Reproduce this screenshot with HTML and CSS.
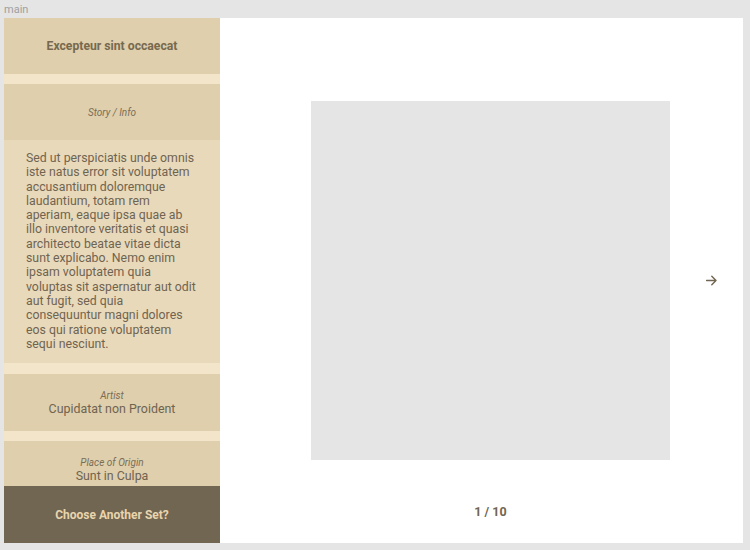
FILE: index.html
```html
<!DOCTYPE html>
<html>
<head>
<meta charset="utf-8">
<link rel="stylesheet" href="styles.css">
</head>
<body>
<div class="label">main</div>
<div class="frame">
  <aside class="sidebar">
    <div class="scroll">
      <div class="block title">Excepteur sint occaecat</div>
      <div class="block small-italic">Story / Info</div>
      <div class="story">Sed ut perspiciatis unde omnis iste natus error sit voluptatem accusantium doloremque laudantium, totam rem aperiam, eaque ipsa quae ab illo inventore veritatis et quasi architecto beatae vitae dicta sunt explicabo. Nemo enim ipsam voluptatem quia voluptas sit aspernatur aut odit aut fugit, sed quia consequuntur magni dolores eos qui ratione voluptatem sequi nesciunt.</div>
      <div class="block meta"><span class="meta-label">Artist</span><span class="meta-value">Cupidatat non Proident</span></div>
      <div class="block meta"><span class="meta-label">Place of Origin</span><span class="meta-value">Sunt in Culpa</span></div>
    </div>
    <div class="choose">Choose Another Set?</div>
  </aside>
  <section class="viewer">
    <div class="image"></div>
    <div class="next">
      <svg width="11" height="11" viewBox="0 0 11 11"><path d="M0.5 5.5H10M5.8 1.2L10 5.5L5.8 9.8" fill="none" stroke="#716651" stroke-width="1.4" stroke-linecap="round" stroke-linejoin="round"/></svg>
    </div>
    <div class="counter">1 / 10</div>
  </section>
</div>
</body>
</html>
```
FILE: styles.css
```css
html, body {
  margin: 0;
  padding: 0;
  background: #e5e5e5;
  font-family: Roboto, "Liberation Sans", sans-serif;
}
.label {
  height: 18px;
  padding-left: 4px;
  font-size: 11px;
  line-height: 20px;
  color: #a0a0a0;
}
.frame {
  margin-left: 4px;
  width: 739px;
  height: 525px;
  display: flex;
  background: #ffffff;
}
.sidebar {
  width: 216px;
  flex: none;
  display: flex;
  flex-direction: column;
  background: #f3e5c9;
}
.scroll {
  flex: 1;
  overflow: hidden;
  display: flex;
  flex-direction: column;
  gap: 10px;
}
.block {
  flex: none;
  height: 56px;
  background: #dfcfad;
  display: flex;
  flex-direction: column;
  align-items: center;
  justify-content: center;
  text-align: center;
}
.title {
  font-size: 12.2px;
  font-weight: 700;
  color: #77694e;
}
.small-italic {
  font-size: 10px;
  font-style: italic;
  color: #7a6d56;
}
.story {
  flex: none;
  margin-top: -10px;
  margin-bottom: 1px;
  height: 223px;
  box-sizing: border-box;
  padding: 11px 24px 0 22px;
  background: #e9d9bb;
  font-size: 12.3px;
  line-height: 14.3px;
  color: #6f6450;
}
.meta {
  padding-top: 1px;
}
.meta-label {
  font-size: 10px;
  font-style: italic;
  color: #7a6d56;
  line-height: 12px;
}
.meta-value {
  font-size: 12.4px;
  color: #6f6450;
  line-height: 14px;
}
.choose {
  flex: none;
  height: 57px;
  background: #716651;
  color: #e8d5ae;
  font-size: 12px;
  font-weight: 700;
  display: flex;
  align-items: center;
  justify-content: center;
}
.viewer {
  flex: 1;
  display: grid;
  grid-template-columns: 91px 359px 1fr;
  grid-template-rows: 83px 359px 1fr;
}
.image {
  grid-column: 2;
  grid-row: 2;
  background: #e5e5e5;
}
.next {
  grid-column: 3;
  grid-row: 2;
  align-self: center;
  justify-self: end;
  margin-right: 26px;
  display: flex;
}
.counter {
  grid-column: 2;
  grid-row: 3;
  margin-top: 44px;
  text-align: center;
  font-size: 12.5px;
  font-weight: 700;
  line-height: 15px;
  color: #716651;
}
```
